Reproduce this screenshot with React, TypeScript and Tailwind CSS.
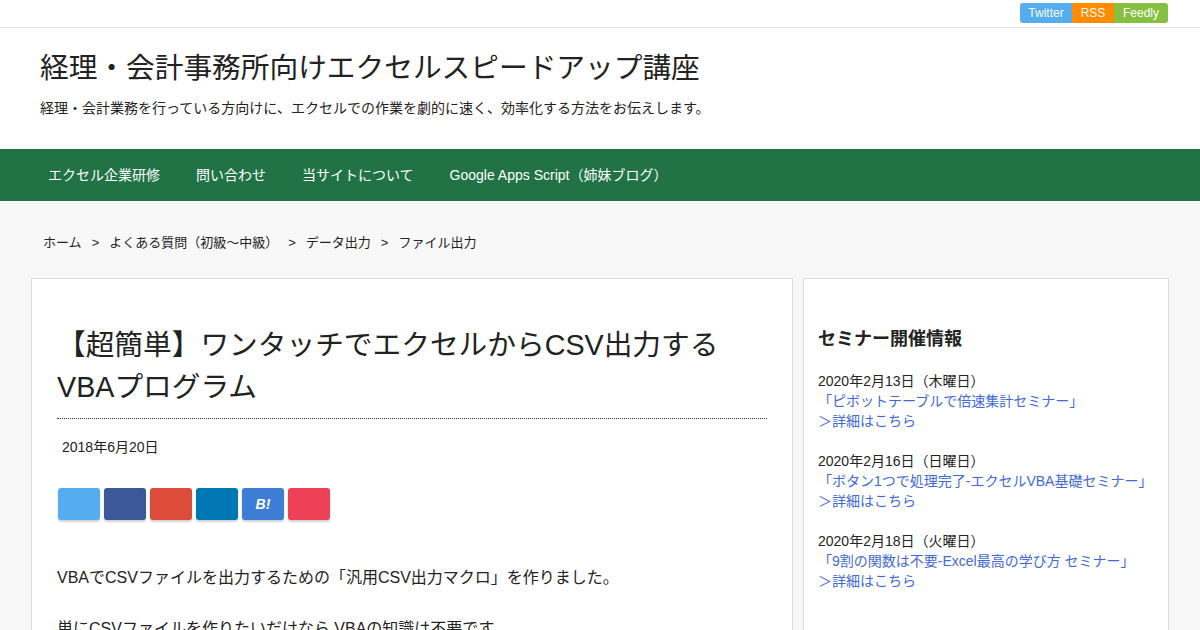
const navItems = ['エクセル企業研修', '問い合わせ', '当サイトについて', 'Google Apps Script（姉妹ブログ）'];

const crumbs = ['ホーム', 'よくある質問（初級～中級）', 'データ出力', 'ファイル出力'];

const seminars = [
  { date: '2020年2月13日（木曜日）', title: '「ピボットテーブルで倍速集計セミナー」' },
  { date: '2020年2月16日（日曜日）', title: '「ボタン1つで処理完了-エクセルVBA基礎セミナー」' },
  { date: '2020年2月18日（火曜日）', title: '「9割の関数は不要-Excel最高の学び方 セミナー」' },
];

const shareColors = ['bg-[#55acee]', 'bg-[#3b5998]', 'bg-[#dd4b39]', 'bg-[#0077b5]', 'bg-[#3c7dd5]', 'bg-[#ee4056]'];

export default function App() {
  return (
    <div className="min-h-[630px] bg-[#f8f8f8] text-[#222] font-['Liberation_Sans','Noto_Sans_CJK_JP',sans-serif]">
      {/* top follow bar */}
      <div className="h-[28px] bg-white border-b border-[#e2e2e2] flex justify-end items-start pt-[3px] pr-[32px]">
        <div className="flex text-[12px] text-white leading-[20px]">
          <span className="w-[52px] h-[20px] text-center bg-[#55acee] rounded-l-[3px]">Twitter</span>
          <span className="w-[42px] h-[20px] text-center bg-[#ff8c00]">RSS</span>
          <span className="w-[54px] h-[20px] text-center bg-[#87c040] rounded-r-[3px]">Feedly</span>
        </div>
      </div>

      {/* header */}
      <header className="bg-white px-[40px] pt-[18px] pb-[30px]">
        <h1 className="text-[28.7px] leading-[45px]">経理・会計事務所向けエクセルスピードアップ講座</h1>
        <p className="mt-[7px] text-[14px] leading-[21px]">経理・会計業務を行っている方向けに、エクセルでの作業を劇的に速く、効率化する方法をお伝えします。</p>
      </header>

      {/* nav */}
      <nav className="bg-[#217346] h-[52px] flex items-center pl-[30px]">
        {navItems.map(item => (
          <a key={item} className="px-[18px] text-white text-[14px] leading-[52px]">
            {item}
          </a>
        ))}
      </nav>

      <div className="mx-[31px]">
        {/* breadcrumb */}
        <div className="pl-[12px] pt-[33px] pb-[26px] text-[13px] leading-[18px] flex">
          {crumbs.map((c, i) => (
            <span key={c} className="flex">
              {i > 0 && <span className="mx-[10px]">&gt;</span>}
              <span>{c}</span>
            </span>
          ))}
        </div>

        <div className="flex gap-[10px] items-start">
          {/* article */}
          <main className="w-[762px] bg-white border border-[#ddd] px-[25px] pt-[45px] pb-[40px]">
            <h2 className="text-[28.7px] leading-[42px] pb-[10px] border-b border-dotted border-[#333]">
              【超簡単】ワンタッチでエクセルからCSV出力するVBAプログラム
            </h2>
            <div className="mt-[18px] pl-[5px] text-[14px] leading-[20px]">2018年6月20日</div>
            <div className="mt-[31px] flex gap-[4px] pl-[1px]">
              {shareColors.map((c, i) => (
                <div key={c} className={`w-[42px] h-[32px] rounded-[3px] shadow-[0_2px_2px_rgba(0,0,0,0.18)] flex items-center justify-center text-white text-[14px] font-bold italic ${c}`}>
                  {i === 4 ? 'B!' : ''}
                </div>
              ))}
            </div>
            <p className="mt-[46px] text-[16px] leading-[24px]">VBAでCSVファイルを出力するための「汎用CSV出力マクロ」を作りました。</p>
            <p className="mt-[27px] text-[16px] leading-[24px]">単にCSVファイルを作りたいだけなら VBAの知識は不要です。</p>
          </main>

          {/* sidebar */}
          <aside className="w-[366px] min-h-[360px] bg-white border border-[#ddd] px-[14px] pt-[46px] pb-[30px]">
            <h3 className="text-[18px] leading-[28px] font-bold">セミナー開催情報</h3>
            <div className="mt-[18px] flex flex-col gap-[20px] text-[14px] leading-[20px]">
              {seminars.map(s => (
                <div key={s.date}>
                  <div>{s.date}</div>
                  <a className="block text-[#4169d8]">{s.title}</a>
                  <a className="block text-[#4169d8]">＞詳細はこちら</a>
                </div>
              ))}
            </div>
          </aside>
        </div>
      </div>
    </div>
  );
}
